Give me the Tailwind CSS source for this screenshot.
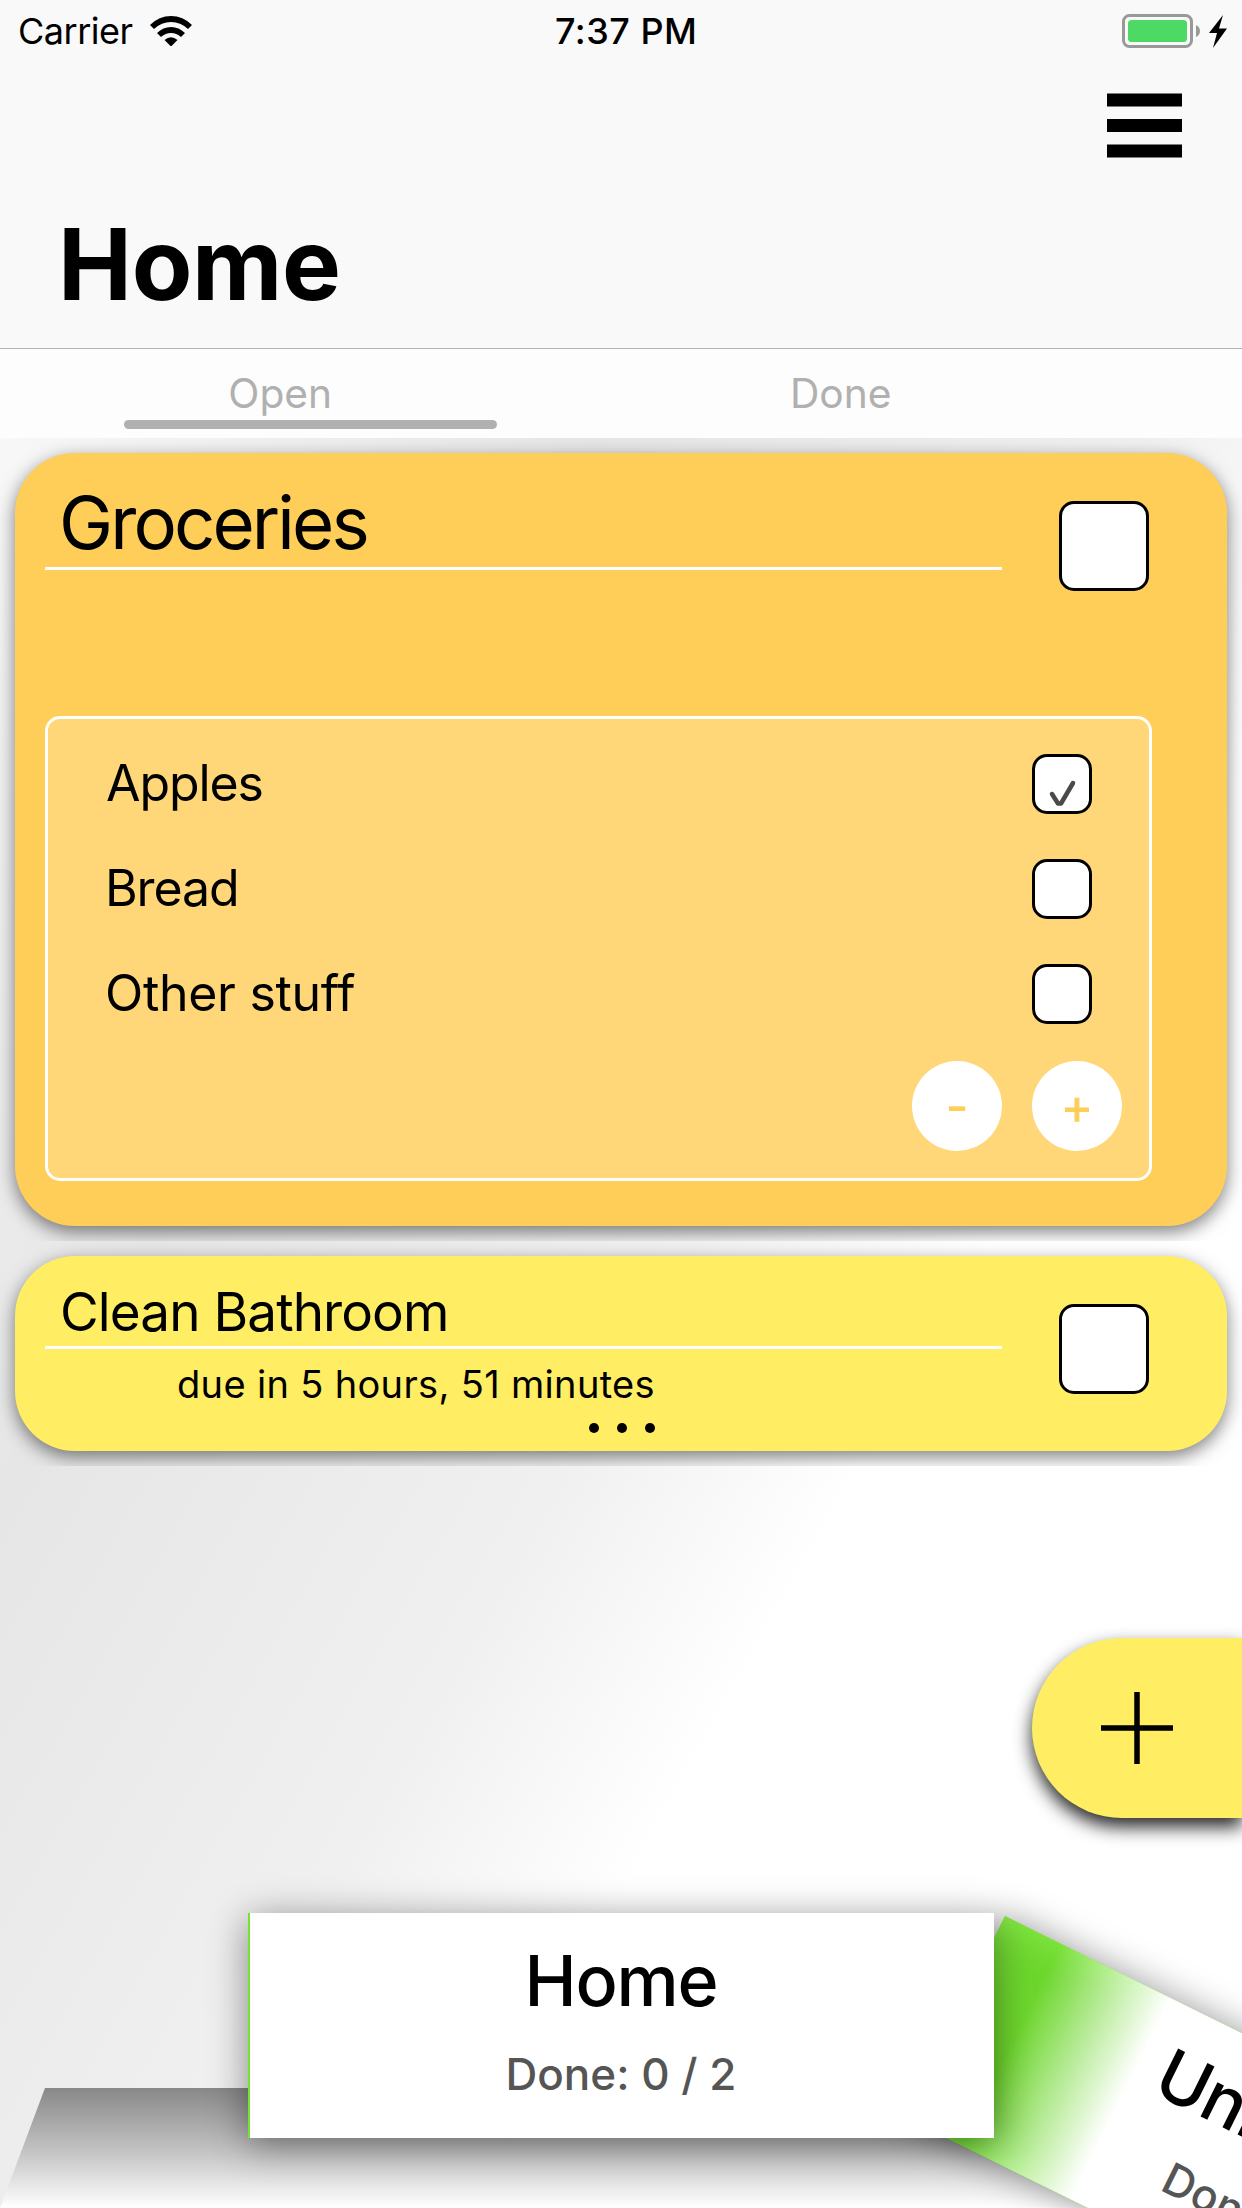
<!DOCTYPE html>
<html lang="en">
<head>
<meta charset="utf-8">
<title>Home</title>
<script src="https://cdn.jsdelivr.net/npm/@tailwindcss/browser@4"></script>
</head>
<body class="flex h-[2208px] w-[1242px] flex-col overflow-hidden bg-[linear-gradient(to_bottom_right,#fff_0%,#e6e6e6_34%,#f0f0f0_56%,#fff_68%,#fff_100%)] font-['Inter',sans-serif] text-black">

  <header class="h-[349px] shrink-0 border-b border-[#b2b2b2] bg-[#f9f9f9]">
    <div class="grid h-[62px] grid-cols-[555px_1fr_auto] items-center pr-[15px]">
      <div class="flex items-center gap-[15px] pl-[18px]">
        <span class="w-[117px] text-[36px] leading-[62px] tracking-[-0.500px] whitespace-nowrap">Carrier</span>
        <svg class="h-[30px] w-[42px]" viewBox="0 0 42 30">
          <path d="M0 9 Q9 0 21 0 T42 9 L38 13 Q30.500 6 21 6 T4 13 Z"/>
          <path d="M7 17 Q13 11 21 11 T35 17 L31 21 Q26.500 17 21 17 T11 21 Z"/>
          <path d="M14.500 24 Q21 18.500 27.500 24 L21 30.500 Z"/>
        </svg>
      </div>
      <span class="text-[36px] leading-[62px] font-medium tracking-[0.500px] whitespace-nowrap">7:37 PM</span>
      <svg class="h-[36px] w-[106px]" viewBox="0 0 106 36">
        <rect x="2.500" y="2.500" width="68" height="31" rx="6" fill="none" stroke="#999" stroke-width="3"/>
        <rect x="7" y="7" width="59" height="22" rx="3.500" fill="#4cd964"/>
        <path d="M75 12 Q79 14 79 18 T75 24 Z" fill="#999"/>
        <path d="M102 2 L88 20 H96 L92 35 L106 15.500 H98 Z"/>
      </svg>
    </div>
    <div class="flex h-[142px] justify-end pt-[31px] pr-[60px]">
      <svg class="h-[65px] w-[75px]" viewBox="0 0 75 65">
        <path d="M0 .5h75v13H0zM0 26h75v13H0zM0 51.500h75v13H0z"/>
      </svg>
    </div>
    <h1 class="pl-[58px] text-[99px] leading-[120px] font-bold tracking-[-0.300px]">Home</h1>
  </header>

  <nav class="h-[89px] shrink-0 bg-[#fdfdfd] pt-[18px] text-[40.700px] leading-[53px] text-[#b0b0b0]">
    <div class="grid w-[1121px] grid-cols-2 text-center">
      <span>Open</span>
      <span>Done</span>
    </div>
    <div class="ml-[124px] h-[9px] w-[373px] rounded-full bg-[#b0b0b0]"></div>
  </nav>

  <main class="shrink-0">
    <section class="h-[803px] overflow-hidden p-[15px]">
      <div class="h-full rounded-[60px] bg-[#ffce59] px-[30px] shadow-[0_6px_18px_rgba(0,0,0,0.5)]">
        <div class="flex items-start">
          <h2 class="w-[957px] border-b-3 border-white pt-[26px] pl-[14px] text-[72.500px] leading-[88px] tracking-[-2.900px]">Groceries</h2>
          <div class="mt-[48px] ml-[57px] size-[90px] rounded-[15px] border-3 border-black bg-white"></div>
        </div>
        <div class="mt-[125px] h-[465px] w-[1107px] rounded-[15px] border-3 border-white bg-[#ffd778] pt-[12px] text-[50px]">
          <div class="flex h-[105px] items-center justify-between pr-[57px] pl-[58px]">
            <span class="tracking-[-1.100px]">Apples</span>
            <div class="size-[60px] rounded-[15px] border-3 border-black bg-white">
              <svg class="size-[54px]" viewBox="0 0 54 54" fill="none" stroke="#4a4a4a" stroke-linecap="round" stroke-linejoin="round">
                <path d="M17 37 L23 46.500 H26 L38 26" stroke-width="4.500"/>
              </svg>
            </div>
          </div>
          <div class="flex h-[105px] items-center justify-between pr-[57px] pl-[57px]">
            <span class="tracking-[-1.100px]">Bread</span>
            <div class="size-[60px] rounded-[15px] border-3 border-black bg-white"></div>
          </div>
          <div class="flex h-[105px] items-center justify-between pr-[57px] pl-[57px]">
            <span class="tracking-[-0.300px]">Other stuff</span>
            <div class="size-[60px] rounded-[15px] border-3 border-black bg-white"></div>
          </div>
          <div class="mt-[15px] flex justify-end gap-[30px] pr-[27px] text-center leading-[90px] font-medium text-[#ffce59]">
            <div class="size-[90px] rounded-full bg-white">-</div>
            <div class="size-[90px] rounded-full bg-white">+</div>
          </div>
        </div>
      </div>
    </section>

    <section class="h-[225px] overflow-hidden p-[15px]">
      <div class="flex h-full items-start rounded-[60px] bg-[#ffee63] px-[30px] shadow-[0_6px_18px_rgba(0,0,0,0.5)]">
        <div class="w-[957px]">
          <h2 class="border-b-3 border-white pt-[22px] pl-[15px] text-[53px] leading-[68px] tracking-[-0.900px]">Clean Bathroom</h2>
          <p class="pl-[132px] text-[38px] leading-[71px] tracking-[0.330px]">due in 5 hours, 51 minutes</p>
          <div class="mt-[3px] flex gap-[18px] pl-[544px]">
            <i class="size-[10px] rounded-full bg-black"></i>
            <i class="size-[10px] rounded-full bg-black"></i>
            <i class="size-[10px] rounded-full bg-black"></i>
          </div>
        </div>
        <div class="mt-[48px] ml-[57px] size-[90px] rounded-[15px] border-3 border-black bg-white"></div>
      </div>
    </section>
  </main>

  <button class="mt-[172px] h-[180px] w-[210px] shrink-0 self-end rounded-l-[90px] bg-[#ffee63] pl-[69px] shadow-[0_9px_18px_rgba(0,0,0,0.85)]">
    <svg class="size-[72px]" viewBox="0 0 72 72" stroke="#000" stroke-width="5.500"><path d="M0 36H72M36 0V72"/></svg>
  </button>

  <div class="relative h-[390px] shrink-0 overflow-hidden">
    <!-- shelf under the list cards -->
    <div class="absolute top-[270px] left-0 h-[120px] w-[1242px] bg-[linear-gradient(to_bottom,#888_0%,#c0c0c0_50%,#fff_100%)] [clip-path:polygon(45px_0,1197px_0,100%_100%,0_100%)]"></div>

    <div class="absolute top-[98px] left-[1005px] h-[225px] w-[746px] origin-top-left rotate-[26.3deg] bg-[#6dd62d] text-center shadow-[0_0_36px_rgba(0,0,0,0.4),inset_0_0_40px_#8bf04c]">
      <div class="h-full bg-[linear-gradient(to_right,#fff0_0,#fff0_62px,#fff_185px)] pt-[25px]">
        <h3 class="text-[70px] leading-[85px] font-medium tracking-[-1px]">University</h3>
        <p class="pt-[21px] pl-[4px] text-[44px] leading-[60px] font-medium text-[#555]">Done: 0 / 0</p>
      </div>
    </div>

    <div class="absolute top-[95px] left-[248px] h-[225px] w-[746px] border-l-2 border-[#74e433] bg-white pt-[25px] pr-[2px] text-center shadow-[0_6px_36px_rgba(0,0,0,0.45)]">
      <h3 class="text-[70px] leading-[85px] font-medium tracking-[-1.200px]">Home</h3>
      <p class="pt-[21px] text-[44px] leading-[60px] font-medium text-[#555]">Done: 0 / 2</p>
    </div>
  </div>
</body>
</html>
